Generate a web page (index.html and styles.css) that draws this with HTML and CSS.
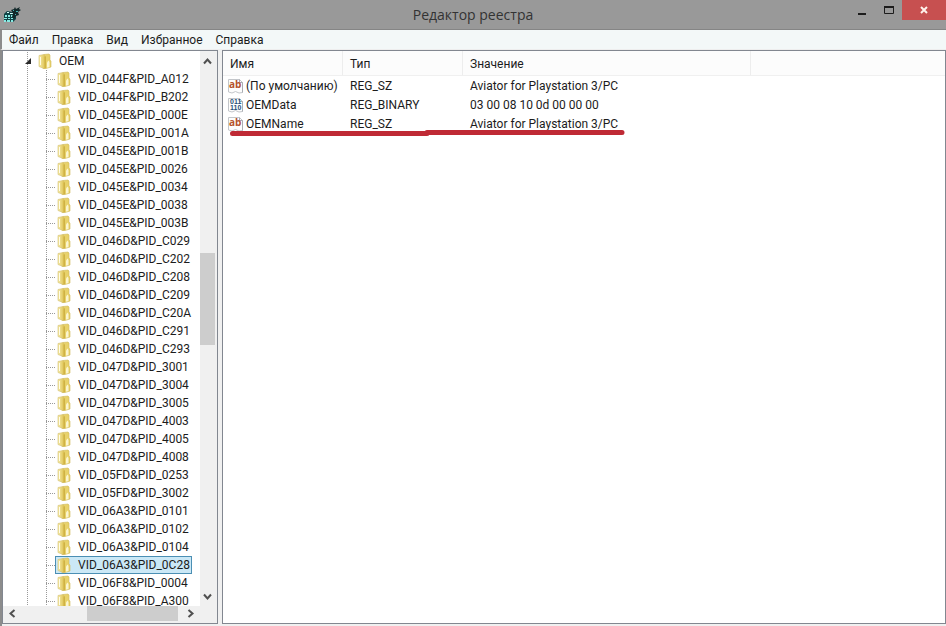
FILE: index.html
```html
<!doctype html>
<html lang="ru">
  <head>
    <meta charset="UTF-8" />
    <meta name="viewport" content="width=device-width, initial-scale=1.0" />
    <title>Редактор реестра</title>
    <link rel="stylesheet" href="styles.css">
  </head>

  <body>
    <!-- shared icons -->
    <svg class="defs" width="0" height="0" aria-hidden="true">
      <linearGradient id="gold" x1="0" x2="1" y1="0" y2="0">
        <stop offset="0" stop-color="#f6ebaa" />
        <stop offset="1" stop-color="#dcc04c" />
      </linearGradient>
      <symbol id="folder" viewBox="0 0 16 16">
        <path d="M7 1.500 12 1l1 1v5l1 1v6l-5 1.500H6z" fill="#e8d26a" stroke="#d0ba5c" stroke-width=".6" />
        <path d="M2 2.500 7 1.500l1.500 2V15L7 15.500 2 13.500z" fill="url(#gold)" stroke="#d4c070" stroke-width=".6" />
        <path d="M7.500 3.500h1.500V15l-1.500.5z" fill="#cfb244" />
        <path d="M10 9.500 11.500 7.500l1 1.500v5L10 14.800z" fill="#fbf5cf" />
        <path d="M3.500 4v8" stroke="#fffce6" />
      </symbol>
      <symbol id="sheet" viewBox="0 0 16 16">
        <path d="M.5 1.500h11l3 3v10l-3.500.5-3.500-1.500-3.500 1.500-3.500-1z" fill="#fdfdfd" stroke="#c3c6ca" />
        <path d="M11.500 1.500v3h3v10" fill="none" stroke="#a9adb2" />
      </symbol>
    </svg>

    <div class="window">
      <header class="titlebar">
        <svg class="app-icon" viewBox="0 0 18 18" width="18" height="18" aria-hidden="true">
          <path d="M1 8 4 5l6 1 3 1v6l-3 3-9-1z" fill="#0f4346" />
          <path d="M2 9h2v2H2zM5 9h2v2H5zM8 9h2v2H8zM1 12h3v1H1zM5 12h2v1H5zM8 12h2v1H8zM1 14h2v2H1zM4 14h3v2H4zM8 14h2v2H8z" fill="#86ebe4" />
          <path d="M4 6h2v1H4zM7 7h3v1H7z" fill="#d7fffb" />
          <path d="m8 4 3-1 1-2 1 2 4-2-1 2 2 1-3 2 1 3-3 1-2 3-2-2 1-4z" fill="#12282a" />
          <path d="M10 4h1v1h-1zM13 5h2v1h-2zM12 8h1v1h-1z" fill="#42b5b4" />
        </svg>
        <h1>Редактор реестра</h1>
        <div class="controls">
          <button class="control" aria-label="Свернуть">
            <svg width="11" height="11" viewBox="0 0 11 11"><path d="M2 8h8v2H2z" fill="#1c1c1c" /></svg>
          </button>
          <button class="control" aria-label="Развернуть">
            <svg width="11" height="11" viewBox="0 0 11 11"><path d="M1.500 2.500h9v6h-9z" fill="none" stroke="#1c1c1c" /><path d="M1 1h10v2H1z" fill="#1c1c1c" /></svg>
          </button>
          <button class="control close" aria-label="Закрыть">
            <svg width="10" height="10" viewBox="0 0 10 10"><path d="m2 2 6 6M8 2 2 8" stroke="#fff3ec" stroke-width="2" /></svg>
          </button>
        </div>
      </header>

      <nav class="menubar">
        <button>Файл</button>
        <button>Правка</button>
        <button>Вид</button>
        <button>Избранное</button>
        <button>Справка</button>
      </nav>

      <main class="panes">
        <section class="tree-pane">
          <div class="tree-view">
            <div class="root">
              <svg class="expander" width="6" height="6" viewBox="0 0 6 6"><path d="M6 0v6H0z" fill="#2b2b2b" /></svg>
              <svg class="icon"><use href="#folder" /></svg>
              <span>OEM</span>
            </div>
            <ul class="tree">
              <li><svg class="icon"><use href="#folder" /></svg><span>VID_044F&amp;PID_A012</span></li>
              <li><svg class="icon"><use href="#folder" /></svg><span>VID_044F&amp;PID_B202</span></li>
              <li><svg class="icon"><use href="#folder" /></svg><span>VID_045E&amp;PID_000E</span></li>
              <li><svg class="icon"><use href="#folder" /></svg><span>VID_045E&amp;PID_001A</span></li>
              <li><svg class="icon"><use href="#folder" /></svg><span>VID_045E&amp;PID_001B</span></li>
              <li><svg class="icon"><use href="#folder" /></svg><span>VID_045E&amp;PID_0026</span></li>
              <li><svg class="icon"><use href="#folder" /></svg><span>VID_045E&amp;PID_0034</span></li>
              <li><svg class="icon"><use href="#folder" /></svg><span>VID_045E&amp;PID_0038</span></li>
              <li><svg class="icon"><use href="#folder" /></svg><span>VID_045E&amp;PID_003B</span></li>
              <li><svg class="icon"><use href="#folder" /></svg><span>VID_046D&amp;PID_C029</span></li>
              <li><svg class="icon"><use href="#folder" /></svg><span>VID_046D&amp;PID_C202</span></li>
              <li><svg class="icon"><use href="#folder" /></svg><span>VID_046D&amp;PID_C208</span></li>
              <li><svg class="icon"><use href="#folder" /></svg><span>VID_046D&amp;PID_C209</span></li>
              <li><svg class="icon"><use href="#folder" /></svg><span>VID_046D&amp;PID_C20A</span></li>
              <li><svg class="icon"><use href="#folder" /></svg><span>VID_046D&amp;PID_C291</span></li>
              <li><svg class="icon"><use href="#folder" /></svg><span>VID_046D&amp;PID_C293</span></li>
              <li><svg class="icon"><use href="#folder" /></svg><span>VID_047D&amp;PID_3001</span></li>
              <li><svg class="icon"><use href="#folder" /></svg><span>VID_047D&amp;PID_3004</span></li>
              <li><svg class="icon"><use href="#folder" /></svg><span>VID_047D&amp;PID_3005</span></li>
              <li><svg class="icon"><use href="#folder" /></svg><span>VID_047D&amp;PID_4003</span></li>
              <li><svg class="icon"><use href="#folder" /></svg><span>VID_047D&amp;PID_4005</span></li>
              <li><svg class="icon"><use href="#folder" /></svg><span>VID_047D&amp;PID_4008</span></li>
              <li><svg class="icon"><use href="#folder" /></svg><span>VID_05FD&amp;PID_0253</span></li>
              <li><svg class="icon"><use href="#folder" /></svg><span>VID_05FD&amp;PID_3002</span></li>
              <li><svg class="icon"><use href="#folder" /></svg><span>VID_06A3&amp;PID_0101</span></li>
              <li><svg class="icon"><use href="#folder" /></svg><span>VID_06A3&amp;PID_0102</span></li>
              <li><svg class="icon"><use href="#folder" /></svg><span>VID_06A3&amp;PID_0104</span></li>
              <li class="selected"><svg class="icon"><use href="#folder" /></svg><span>VID_06A3&amp;PID_0C28</span></li>
              <li><svg class="icon"><use href="#folder" /></svg><span>VID_06F8&amp;PID_0004</span></li>
              <li><svg class="icon"><use href="#folder" /></svg><span>VID_06F8&amp;PID_A300</span></li>
            </ul>
          </div>
          <div class="scroll-v">
            <button aria-label="Вверх"><svg width="9" height="9" viewBox="0 0 9 9"><path d="m1 6.500 3.500-4L8 6.500" /></svg></button>
            <div class="track"><div class="thumb"></div></div>
            <button aria-label="Вниз"><svg width="9" height="9" viewBox="0 0 9 9"><path d="m1 2.500 3.500 4L8 2.500" /></svg></button>
          </div>
          <div class="scroll-h">
            <button aria-label="Влево"><svg width="9" height="9" viewBox="0 0 9 9"><path d="m6.500 1-4 3.500 4 3.500" /></svg></button>
            <div class="track"><div class="thumb"></div></div>
            <button aria-label="Вправо"><svg width="9" height="9" viewBox="0 0 9 9"><path d="m2.500 1 4 3.500-4 3.500" /></svg></button>
          </div>
        </section>

        <section class="list-pane">
          <table>
            <colgroup>
              <col class="col-name" />
              <col class="col-type" />
              <col class="col-value" />
              <col />
            </colgroup>
            <thead>
              <tr>
                <th>Имя</th>
                <th>Тип</th>
                <th>Значение</th>
                <th></th>
              </tr>
            </thead>
            <tbody>
              <tr>
                <td class="name">
                  <div>
                    <svg class="icon" viewBox="0 0 16 16"><use href="#sheet" /><text class="ab" x="1" y="10">ab</text></svg>
                    (По умолчанию)
                  </div>
                </td>
                <td>REG_SZ</td>
                <td>Aviator for Playstation 3/PC</td>
                <td></td>
              </tr>
              <tr>
                <td class="name">
                  <div>
                    <svg class="icon" viewBox="0 0 16 16"><use href="#sheet" /><text class="bits" x="2" y="7">011</text><text class="bits" x="2" y="13">110</text></svg>
                    OEMData
                  </div>
                </td>
                <td>REG_BINARY</td>
                <td>03 00 08 10 0d 00 00 00</td>
                <td></td>
              </tr>
              <tr>
                <td class="name">
                  <div>
                    <svg class="icon" viewBox="0 0 16 16"><use href="#sheet" /><text class="ab" x="1" y="10">ab</text></svg>
                    OEMName
                    <svg class="marker" width="397" height="8" viewBox="0 0 397 8"><path d="M3.500 5.500H198V4.500h195" /></svg>
                  </div>
                </td>
                <td>REG_SZ</td>
                <td>Aviator for Playstation 3/PC</td>
                <td></td>
              </tr>
            </tbody>
          </table>
        </section>
      </main>
    </div>
  </body>
</html>
```

FILE: styles.css
```css
* {
  box-sizing: border-box;
}

body {
  margin: 0;
  font-family: Roboto, "Noto Sans", sans-serif;
  font-size: 12px;
  color: #1c1c1c;
}

button {
  display: flex;
  align-items: center;
  justify-content: center;
  margin: 0;
  padding: 0;
  border: none;
  background: none;
  font: inherit;
  color: inherit;
}

.defs {
  position: absolute;
}

.window {
  display: flex;
  flex-direction: column;
  height: 100vh;
  background-color: #f0f0f0;
  overflow: hidden;
}

/* title bar */
.titlebar {
  display: grid;
  grid-template-columns: 1fr auto 1fr;
  height: 30px;
  background-color: #999;
  border-bottom: 1px solid #858585;
}

.app-icon {
  margin: 6px 3px;
}

.titlebar h1 {
  margin: 0;
  font-family: "Open Sans", "Noto Sans", sans-serif;
  font-size: 14px;
  font-weight: normal;
  line-height: 30px;
  color: #333;
}

.controls {
  display: flex;
  justify-content: flex-end;
  align-items: flex-start;
}

.control {
  width: 27px;
  height: 20px;
}

.close {
  width: 44px;
  background-color: #c75050;
}

/* menu */
.menubar {
  display: flex;
  gap: 13px;
  height: 20px;
  padding-left: 7px;
  border-left: 2px solid #8c8c8c;
  border-bottom: 1px solid #eee;
  background-color: #f3f8f8;
}

/* panes */
.panes {
  flex: 1;
  display: flex;
  gap: 4px;
  min-height: 0;
  padding-bottom: 2px;
  border-left: 2px solid #8c8c8c;
}

.tree-pane {
  display: grid;
  grid-template-columns: 1fr 17px;
  grid-template-rows: 1fr 17px;
  width: 216px;
  min-height: 0;
  border: 1px solid #828790;
  background-color: #f0f0f0;
}

.tree-view {
  min-height: 0;
  padding-top: 1px;
  overflow: hidden;
  background-color: #fff;
}

.icon {
  flex: none;
  width: 16px;
  height: 16px;
}

.root,
.tree li {
  display: flex;
  align-items: center;
  height: 18px;
  line-height: 18px;
  white-space: nowrap;
}

.root {
  gap: 6px;
  padding-left: 22px;
  background: repeating-linear-gradient(to bottom, #999 0 1px, transparent 1px 2px) 24px 0 / 1px 100% no-repeat;
}

.tree {
  margin: 0;
  padding: 0 0 0 43px;
  list-style: none;
  background:
    repeating-linear-gradient(to bottom, #999 0 1px, transparent 1px 2px) 24px 0 / 1px 100% no-repeat,
    repeating-linear-gradient(to bottom, #999 0 1px, transparent 1px 2px) 43px 0 / 1px 100% no-repeat;
}

.tree li {
  padding-left: 10px;
  background: repeating-linear-gradient(to right, #999 0 1px, transparent 1px 2px) 0 9px / 10px 1px no-repeat;
}

.tree span {
  padding: 0 1px 0 6px;
}

.selected .icon,
.selected span {
  height: 18px;
  background-color: #cbe8f6;
  border: solid #4b8fb4;
  border-width: 1px 0;
  line-height: 16px;
}

.selected .icon {
  width: 17px;
  margin-left: -1px;
  border-left-width: 1px;
}

.selected span {
  border-right-width: 1px;
}

/* scrollbars */
.scroll-v,
.scroll-h {
  display: flex;
}

.scroll-v {
  flex-direction: column;
}

.scroll-v button,
.scroll-h button {
  width: 15px;
  height: 15px;
}

.scroll-v button {
  height: 20px;
}

.scroll-h button {
  width: 19px;
}

.scroll-v path,
.scroll-h path {
  fill: none;
  stroke: #505050;
  stroke-width: 2;
}

.track {
  flex: 1;
  display: flex;
}

.scroll-v .track {
  flex-direction: column;
  padding-top: 182px;
}

.scroll-h .track {
  padding-left: 65px;
}

.thumb {
  background-color: #cdcdcd;
}

.scroll-v .thumb {
  width: 15px;
  height: 92px;
}

.scroll-h .thumb {
  width: 91px;
  height: 15px;
}

/* values list */
.list-pane {
  flex: 1;
  min-width: 0;
  border: 1px solid #828790;
  background-color: #fff;
}

table {
  width: 100%;
  table-layout: fixed;
  border-collapse: separate;
  border-spacing: 0;
}

.col-name,
.col-type {
  width: 120px;
}

.col-value {
  width: 288px;
}

th {
  height: 25px;
  padding: 2px 7px 0;
  border-right: 1px solid #ededed;
  border-bottom: 1px solid #f0f0f0;
  background-color: #fcfcfc;
  font-weight: normal;
  text-align: left;
}

th:last-child {
  border-right: none;
}

td {
  height: 19px;
  padding: 1px 7px 0;
  line-height: 18px;
  white-space: nowrap;
}

td.name {
  padding: 1px 0 0 5px;
}

.name div {
  display: flex;
  align-items: center;
  gap: 2px;
  position: relative;
}

.ab {
  fill: #b5532c;
  font: bold 10px "Open Sans", sans-serif;
}

.bits {
  fill: #1f4e79;
  font: bold 7px "Liberation Sans", sans-serif;
}

/* red pen line under the OEMName row */
.marker {
  position: absolute;
  left: 1px;
  top: 13px;
}

.marker path {
  fill: none;
  stroke: #bf2a35;
  stroke-width: 5;
  stroke-linecap: round;
  stroke-linejoin: round;
}
```
